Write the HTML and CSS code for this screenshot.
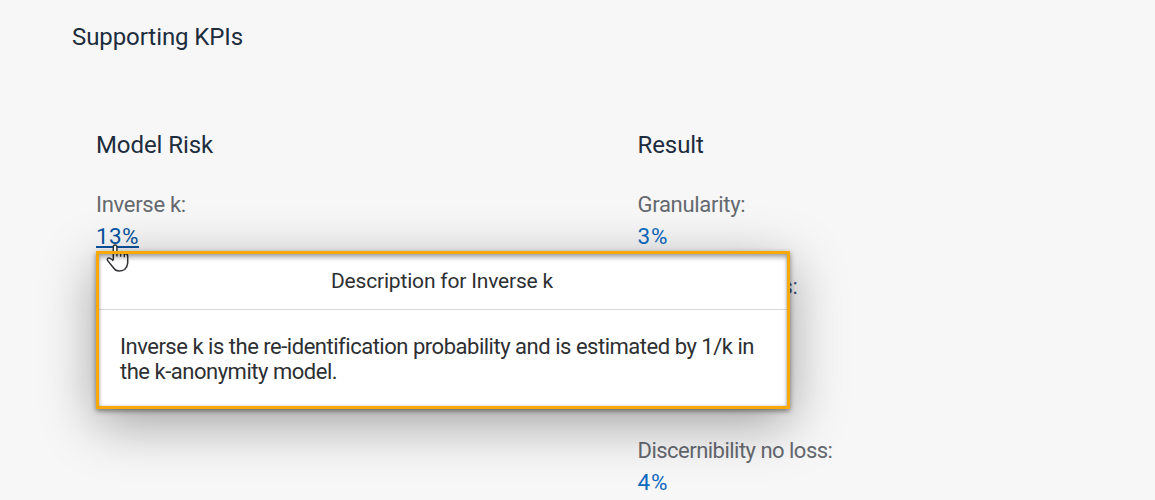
FILE: index.html
```html
<!DOCTYPE html>
<html lang="en">
<head>
<meta charset="utf-8">
<title>Supporting KPIs</title>
<link rel="stylesheet" href="styles.css">
</head>
<body>
<main class="page">
  <h1 class="page-title">Supporting KPIs</h1>
  <div class="columns">
    <section class="column">
      <h2 class="column-title">Model Risk</h2>
      <dl class="kpi">
        <dt>Inverse k:</dt>
        <dd><a class="link link-hover">13%</a></dd>
      </dl>
    </section>
    <section class="column">
      <h2 class="column-title">Result</h2>
      <dl class="kpi">
        <dt>Granularity:</dt>
        <dd><a class="link">3%</a></dd>
      </dl>
      <dl class="kpi kpi-loss">
        <dt class="covered">s:</dt>
      </dl>
      <dl class="kpi">
        <dt class="long-label">Discernibility no loss:</dt>
        <dd><a class="link">4%</a></dd>
      </dl>
    </section>
  </div>
  <aside class="popover">
    <header class="popover-header">Description for Inverse k</header>
    <p class="popover-text">Inverse k is the re-identification probability and is estimated by 1/k in<br>the k-anonymity model.</p>
  </aside>
  <svg class="cursor" width="26" height="30" viewBox="0 0 26 30">
    <path class="hand" d="M8.3 17V4Q8.3 2 10.1 2T11.9 4V9.7Q13.8 8.2 15.6 9.9Q17.8 8.8 19.3 10.6Q22.6 10.3 22.7 13.5V20Q22.5 24 19.6 26.5Q17.4 28 14.2 28Q10.5 27.8 8.6 25L2.7 17.6Q1.7 15.8 3.2 15.1T6.6 16.3L8.3 17.6"/>
    <path class="fingers" d="M11.9 9V13.5M15.6 9.9V13.8M19.3 10.6V14.3"/>
  </svg>
  <div class="frame"></div>
</main>
</body>
</html>
```

FILE: styles.css
```css
* {
  box-sizing: border-box;
}

body,
h1,
h2,
dl,
dd,
p {
  margin: 0;
}

body {
  background: #f7f7f7;
  font-family: Roboto, "Liberation Sans", sans-serif;
  overflow: hidden;
}

.page {
  position: relative;
  height: 500px;
  padding: 21px 72px 0;
  overflow: hidden;
}

.page-title,
.column-title {
  color: #1d2d3e;
  font-size: 24px;
  font-weight: 400;
  line-height: 32px;
  letter-spacing: -.08px;
  white-space: nowrap;
}

.columns {
  display: grid;
  grid-template-columns: 541.5px 1fr;
  padding: 76px 0 0 24px;
}

.kpi {
  padding-top: 28px;
  font-size: 22px;
  line-height: 32px;
  white-space: nowrap;
}

.kpi dt {
  color: #65696f;
  letter-spacing: -.29px;
}

.kpi dd {
  height: 31px;
  line-height: 30px;
}

.kpi .long-label {
  letter-spacing: -.52px;
}

.kpi-loss {
  height: 155px;
  padding-top: 19px;
}

.kpi .covered {
  padding-left: 144px;
  color: #4a5878;
}

.link {
  color: #0f6ac0;
  font-size: 22.5px;
  letter-spacing: .9px;
}

.link-hover {
  color: #0854a0;
  letter-spacing: .4px;
  text-decoration: underline;
  text-decoration-thickness: 1.5px;
  text-underline-offset: 2px;
}

.popover,
.frame {
  position: absolute;
  left: 96px;
  top: 251px;
  width: 694px;
  height: 158px;
}

.popover {
  padding: 4px 3px 3px;
  background: #fff;
  color: #2d2f32;
  box-shadow:
    0 2px 5px rgba(0, 0, 0, .45),
    0 14px 54px rgba(0, 0, 0, .36);
}

.frame {
  border: 3px solid #f9a907;
  box-shadow:
    inset 0 4px 4px rgba(0, 0, 0, .28),
    inset 0 0 3px rgba(0, 0, 0, .25);
}

.popover-header {
  height: 55px;
  padding-right: 2px;
  border-bottom: 1px solid #d9d9d9;
  font-size: 21px;
  line-height: 53px;
  letter-spacing: -.18px;
  text-align: center;
}

.popover-text {
  padding: 24px 21px;
  font-size: 22px;
  line-height: 25px;
  letter-spacing: -.48px;
  white-space: nowrap;
}

.cursor {
  position: absolute;
  left: 105px;
  top: 243px;
}

.hand {
  fill: #fff;
  stroke: #303236;
  stroke-width: 1.5;
}

.fingers {
  fill: none;
  stroke: #303236;
  stroke-width: 1.4;
}
```
